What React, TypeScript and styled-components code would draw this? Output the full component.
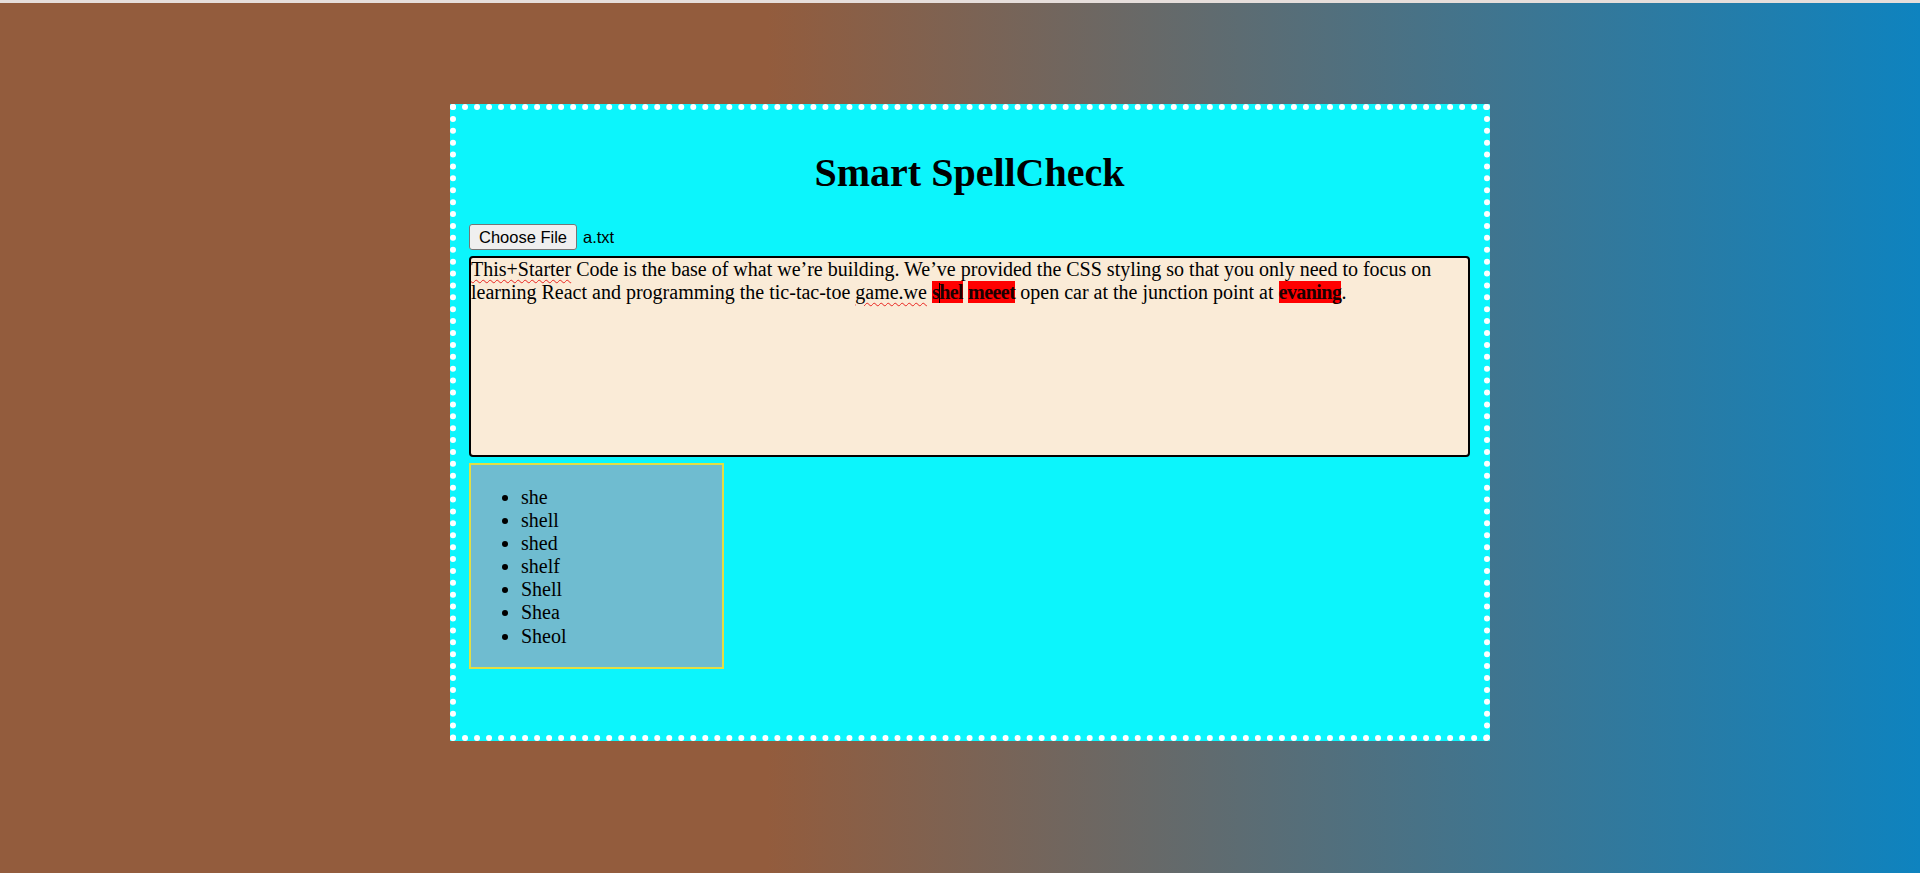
import React from "react";
import styled, { createGlobalStyle } from "styled-components";

const GlobalStyle = createGlobalStyle`
  html, body {
    margin: 0;
    padding: 0;
    overflow: hidden;
  }
  body {
    background: #e6dedb;
    border-top: 3px solid #e6dedb;
    font-family: "Liberation Serif", "Times New Roman", serif;
  }
`;

const Page = styled.div`
  box-sizing: border-box;
  min-height: calc(100vh - 3px);
  background: linear-gradient(to right, #935c3d 0%, #935c3d 40%, #0e83bf 100%);
  padding: 101px 0 0 20px;
  display: flex;
  justify-content: center;
  align-items: flex-start;
`;

const Card = styled.div`
  box-sizing: border-box;
  width: 1040px;
  height: 637px;
  border: 6px dotted #ffffff;
  background: #0cf5fc;
  padding: 13px 14px 13px 13px;
  display: flex;
  flex-direction: column;
`;

const Title = styled.h1`
  margin: 27px 0 28px;
  font-family: "Liberation Serif", "Times New Roman", serif;
  font-size: 40px;
  line-height: 46px;
  font-weight: bold;
  text-align: center;
  color: #000;
`;

const FileRow = styled.div`
  display: flex;
  align-items: center;
  height: 26px;
  margin-bottom: 6px;
  gap: 6px;
`;

const FileButton = styled.button`
  box-sizing: border-box;
  height: 26px;
  width: 108px;
  padding: 0;
  border: 1px solid #767676;
  border-radius: 3px;
  background: #efefef;
  color: #000;
  font-family: "Liberation Sans", Arial, sans-serif;
  font-size: 16.5px;
  cursor: default;
`;

const FileName = styled.span`
  font-family: "Liberation Sans", Arial, sans-serif;
  font-size: 16.5px;
  color: #000;
`;

const Editor = styled.div`
  box-sizing: border-box;
  height: 201px;
  border: 2px solid #000;
  border-radius: 4px;
  background: #faebd7;
  padding: 0;
  font-family: "Liberation Serif", "Times New Roman", serif;
  font-size: 20px;
  line-height: 23px;
  color: #000;
  margin-bottom: 6px;
`;

const Misspelled = styled.span`
  text-decoration: underline wavy #e8231e;
  text-decoration-thickness: 1px;
  text-underline-offset: 3px;
`;

const Wrong = styled.span`
  background: #ff0000;
  font-weight: bold;
  letter-spacing: -0.55px;
  color: #1a0000;
`;

const Caret = styled.span`
  display: inline-block;
  width: 1px;
  height: 20px;
  background: #000;
  vertical-align: -4px;
  margin-right: -1px;
`;

const Suggestions = styled.div`
  box-sizing: content-box;
  width: 251px;
  height: 202px;
  border: 2px solid #e2de44;
  background: #6fbcd0;
`;

const SuggestionList = styled.ul`
  margin: 21px 0 20px;
  padding-left: 50px;
  font-family: "Liberation Serif", "Times New Roman", serif;
  font-size: 20px;
  line-height: 23.1px;
  color: #000;
`;

const Suggestion = styled.li`
  list-style: disc;
`;

const suggestions = ["she", "shell", "shed", "shelf", "Shell", "Shea", "Sheol"];

export default function App() {
  return (
    <>
      <GlobalStyle />
      <Page>
        <Card>
          <Title>Smart SpellCheck</Title>
          <FileRow>
            <FileButton type="button">Choose File</FileButton>
            <FileName>a.txt</FileName>
          </FileRow>
          <Editor>
            <Misspelled>This+Starter</Misspelled> Code is the base of what we’re building. We’ve provided the CSS styling so that you only need to focus on learning React and programming the tic-tac-toe{" "}
            <Misspelled>game.we</Misspelled>{" "}
            <Wrong>
              s<Caret />hel
            </Wrong>{" "}
            <Wrong>meeet</Wrong> open car at the junction point at <Wrong>evaning</Wrong>.
          </Editor>
          <Suggestions>
            <SuggestionList>
              {suggestions.map((s) => (
                <Suggestion key={s}>{s}</Suggestion>
              ))}
            </SuggestionList>
          </Suggestions>
        </Card>
      </Page>
    </>
  );
}
